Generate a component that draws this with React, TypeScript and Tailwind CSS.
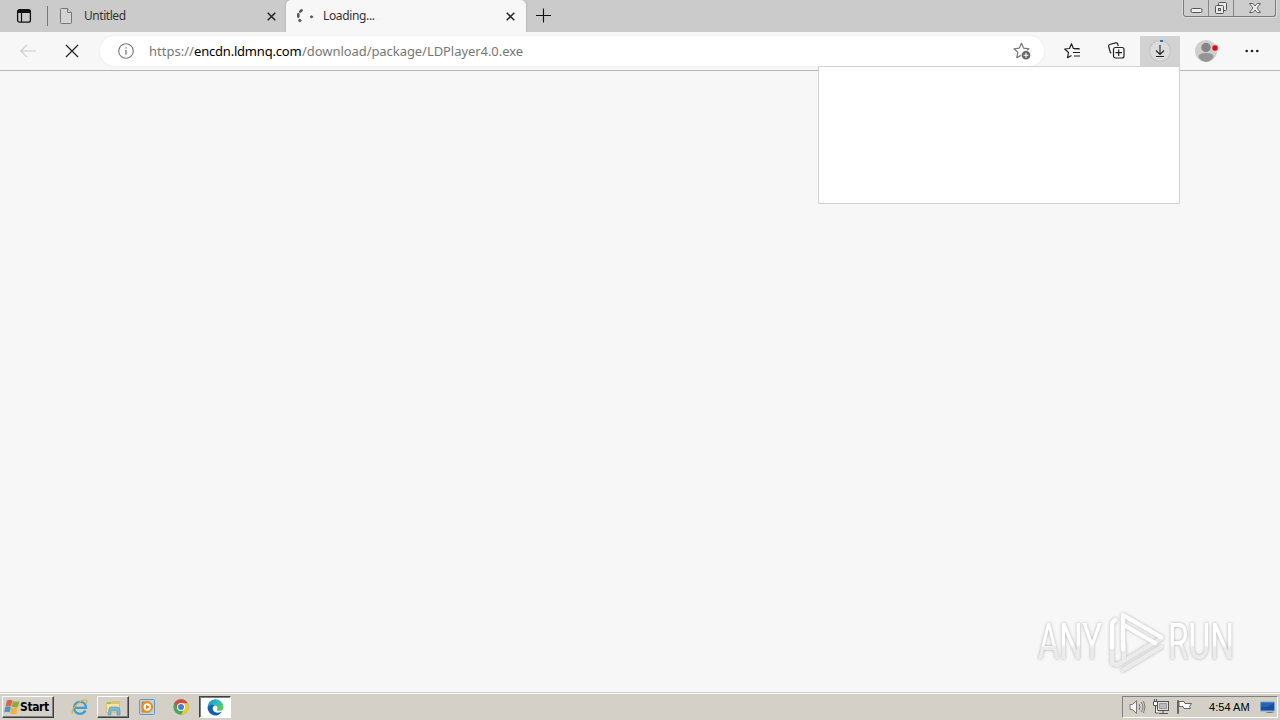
import type { ReactNode } from 'react'

export default function App() {
  return (
    <div className="relative flex h-[720px] w-[1280px] flex-col overflow-hidden bg-[#f7f7f7] font-['Noto_Sans','Open_Sans',sans-serif] text-[#222]">
      <TabStrip />
      <Toolbar />
      <main className="flex flex-1 items-end justify-end pr-[30px] pb-[15px]">
        <Watermark />
      </main>
      <Taskbar />
      {/* downloads flyout */}
      <div className="absolute top-[66px] left-[818px] h-[138px] w-[362px] border border-[#d2d2d2] bg-white" />
    </div>
  )
}

function TabStrip() {
  return (
    <header className="flex h-8 shrink-0 bg-[#cbcbcb]">
      <div className="flex w-[47px] items-center pl-4">
        <svg width="16" height="16" viewBox="0 0 16 16" fill="none" stroke="#111">
          <rect x="1.6" y="1.6" width="12.8" height="12.6" rx="2" strokeWidth="1.3" />
          <path d="M2 3.4h12" strokeWidth="3.2" />
          <path d="M5.5 5v9" strokeWidth="1.2" />
        </svg>
      </div>
      <div className="mt-[6px] h-5 w-px bg-[#777]" />
      <div className="flex w-[238px] items-center pl-3">
        <svg width="12" height="16" viewBox="0 0 12 16" fill="#d4d4d4" stroke="#777">
          <path d="M.5 1.5q0-1 1-1H7.500L11.500 4.500V14.500q0 1-1 1h-9q-1 0-1-1z" />
          <path d="M7.500.5v4h4" />
        </svg>
        <span className="ml-3 text-[12px] leading-4 tracking-[-0.45px] text-[#333]">Untitled</span>
        <CloseIcon className="mr-[10px] ml-auto" />
      </div>
      <div className="flex w-[240px] items-center rounded-t-[5px] bg-[#f7f7f7] pl-[10px] shadow-[0_0_2px_#999]">
        <svg width="18" height="16" viewBox="0 0 18 16" fill="none" stroke="#555" strokeLinecap="round">
          <path d="M5.600 2.300 4.200 3.600M2.300 6.300v2.300" strokeWidth="2.600" />
          <circle cx="3.800" cy="12.500" r="1.200" fill="#555" strokeWidth=".8" />
          <circle cx="15.500" cy="8.800" r="1.100" fill="#555" strokeWidth=".8" />
        </svg>
        <span className="ml-[9px] text-[12px] leading-4 tracking-[-0.35px] text-[#333]">Loading...</span>
        <CloseIcon className="mr-[11px] ml-auto" />
      </div>
      <svg className="mt-2 ml-[10px]" width="15" height="15" viewBox="0 0 15 15" stroke="#111" strokeWidth="1.1">
        <path d="M0 7.500h15M7.500.5v14" />
      </svg>
      <div className="mr-[4px] ml-auto flex h-[17px] w-[93px] rounded-b-[3px] border border-t-0 border-[#7b7b7b] bg-[#cdcdcd] shadow-[0_0_0_1px_#dcdcdc]">
        <div className="flex w-[25px] justify-center border-r border-[#888]">
          <svg width="13" height="16" viewBox="0 0 13 16">
            <rect x="1" y="8.500" width="11" height="4" rx="1.500" fill="#eee" stroke="#555" />
          </svg>
        </div>
        <div className="flex w-[25px] justify-center border-r border-[#888]">
          <svg width="14" height="16" viewBox="0 0 14 16" fill="#e8e8e8" stroke="#555">
            <rect x="4.500" y="2.500" width="8" height="8" rx="1" />
            <rect x="1.500" y="5.500" width="8" height="8" rx="1" />
            <rect x="4.500" y="8.500" width="2" height="2" />
          </svg>
        </div>
        <div className="flex flex-1 justify-center">
          <svg width="14" height="16" viewBox="0 0 14 16" fill="#eee" stroke="#555" strokeWidth=".9">
            <path d="M1.500 3.500h3.300L7 6l2.200-2.500h3.300L9 8l3.500 4.500H9.200L7 10l-2.200 2.500H1.500L5 8z" />
          </svg>
        </div>
      </div>
    </header>
  )
}

function CloseIcon({ className }: { className: string }) {
  return (
    <svg className={className} width="9" height="9" viewBox="0 0 9 9" stroke="#222" strokeWidth="1.5">
      <path d="m.7.7 7.600 7.600M8.300.7.700 8.300" />
    </svg>
  )
}

function Toolbar() {
  return (
    <nav className="flex h-[39px] shrink-0 border-b border-[#b8b8b8] bg-[#f7f7f7]">
      <div className="flex w-[100px] items-center gap-[29px] pl-5">
        <svg width="16" height="14" viewBox="0 0 16 14" fill="none" stroke="#cacaca" strokeWidth="1.1">
          <path d="M7 .8.800 7 7 13.200M1 7h15" />
        </svg>
        <svg width="14" height="14" viewBox="0 0 14 14" stroke="#222" strokeWidth="1.2">
          <path d="m1 1 12 12M13 1 1 13" />
        </svg>
      </div>
      <div className="mt-1 flex h-[30px] w-[944px] items-center rounded-full bg-white pl-[18px] shadow-[0_0_2px_1px_#f0f0f0]">
        <svg width="16" height="16" viewBox="0 0 16 16" fill="none" stroke="#777" strokeWidth="1.1">
          <circle cx="8" cy="8" r="7.300" />
          <path d="M8 7v4.700M8 4.300v1.300" strokeWidth="1.300" />
        </svg>
        <div className="ml-[15px] flex text-[13px] leading-5 whitespace-nowrap text-[#777]">
          <span className="w-[45px]">https://</span>
          <span className="w-[108px] tracking-[-0.2px] text-black">encdn.ldmnq.com</span>
          <span className="tracking-[-0.06px]">/download/package/LDPlayer4.0.exe</span>
        </div>
        <svg className="mr-[13px] ml-auto" width="18" height="18" viewBox="0 0 18 18">
          <path d="m8.500 1.300 2.200 4.900 5.300.6-4 3.600 1 5.300-4.500-2.600-4.700 2.600 1-5.300L1 6.800l5.200-.6z" fill="none" stroke="#777" strokeWidth="1.200" strokeLinejoin="round" />
          <circle cx="13" cy="13.200" r="4.700" fill="#666" stroke="#fff" strokeWidth=".8" />
          <path d="M10.500 13.200h5M13 10.700v5" stroke="#fff" strokeWidth="1.100" />
        </svg>
      </div>
      <div className="flex flex-1 items-center pb-px pl-[20px]">
        <svg width="17" height="16" viewBox="0 0 17 16" fill="none" stroke="#222" strokeWidth="1.200" strokeLinejoin="round">
          <path d="M15 5.700 9.300 5.300 7.500.8 5.500 5.500.7 6l3.800 3.500-1 5.200 4-2.300M10 6h6M9 9.500h7M10 13h6" />
        </svg>
        <svg className="ml-[27px]" width="17" height="17" viewBox="0 0 17 17" fill="none" stroke="#222" strokeWidth="1.200">
          <path d="m3.300 11.200-1-.8L.7 4.500q-.4-1.500 1-2l6-1.600q1.500-.4 2 1l.5 2.200" />
          <rect x="5.500" y="5.500" width="10.500" height="10.500" rx="2" />
          <path d="M10.700 7.500v6.500M7.500 10.700H14" />
        </svg>
        <div className="mt-[1px] ml-[15px] flex h-[30px] w-[40px] items-center justify-center bg-[#d2d2d2]">
          <svg width="24" height="24" viewBox="0 0 24 24" fill="none">
            <circle cx="12" cy="12" r="10.500" fill="#dcdcdc" stroke="#c8c8c8" strokeWidth="1.500" />
            <path d="M12 2h3" stroke="#2876b8" strokeWidth="2" />
            <path d="M12 6v9.500m-4-4 4 4 4-4M8 17.500h8" stroke="#222" strokeWidth="1.100" />
          </svg>
        </div>
        <svg className="ml-[15px]" width="24" height="24" viewBox="0 0 24 24">
          <circle cx="11" cy="12" r="11" fill="#d0cfcd" />
          <circle cx="11" cy="8.500" r="4.700" fill="#858585" />
          <path d="M3.500 18c0-3 3-4 7.500-4s7.500 1 7.500 4c-2 3.300-4.700 4.700-7.500 4.700S5.500 21.300 3.500 18z" fill="#959595" />
          <circle cx="20" cy="9" r="3.200" fill="#e00b16" stroke="#eee" strokeWidth=".6" />
        </svg>
        <svg className="ml-[26px]" width="14" height="4" viewBox="0 0 14 4" fill="#222">
          <circle cx="1.700" cy="2" r="1.350" />
          <circle cx="7" cy="2" r="1.350" />
          <circle cx="12.300" cy="2" r="1.350" />
        </svg>
      </div>
    </nav>
  )
}

function Watermark() {
  return (
    <svg width="220" height="74" viewBox="0 0 220 74">
      <defs>
        <linearGradient id="sheen" x1="0" y1="0" x2="0" y2="1">
          <stop offset=".54" stopColor="#fff" />
          <stop offset=".6" stopColor="#ebebeb" />
        </linearGradient>
        <filter id="glow" x="-10%" y="-20%" width="120%" height="140%">
          <feDropShadow dx="0" dy="0" stdDeviation="1.600" floodColor="#777" floodOpacity=".6" />
        </filter>
      </defs>
      <g filter="url(#glow)" fill="url(#sheen)" fontFamily="Roboto, 'Liberation Sans', sans-serif" fontSize="50">
        <text transform="translate(8 56) scale(.655 1)">ANY</text>
        <text transform="translate(138 56) scale(.667 1)">RUN</text>
      </g>
      <g filter="url(#glow)" fill="none" strokeLinecap="round" strokeLinejoin="round" strokeWidth="4.300">
        <path d="M94 42v14M82 36v24l5 2 45-27M93 67l38-23" stroke="#ebebeb" />
        <path d="M82 44V20l3-3M93 46V12l38 22M94 22l31 18" stroke="#fff" />
      </g>
    </svg>
  )
}

function TaskButton({ active, children }: { active?: boolean; children: ReactNode }) {
  return (
    <div
      className={`flex h-[22px] w-8 items-center justify-center border ${
        active
          ? 'border-t-[#404040] border-r-white border-b-white border-l-[#404040] bg-white shadow-[inset_1px_1px_#808080]'
          : 'border-t-white border-r-[#404040] border-b-[#404040] border-l-white bg-[#d4d0c8] shadow-[inset_-1px_-1px_#808080]'
      }`}
    >
      {children}
    </div>
  )
}

function Taskbar() {
  return (
    <footer className="flex h-7 shrink-0 items-start border-t border-[#d4d0c8] bg-[#d4d0c8] pt-[3px] shadow-[inset_0_1px_white]">
      <div className="ml-[2px] flex h-[22px] w-[52px] items-center border border-t-white border-r-[#404040] border-b-[#404040] border-l-white pl-px shadow-[inset_-1px_-1px_#808080]">
        <svg width="16" height="16" viewBox="0 0 16 16">
          <path d="M3 1.500q3-1.700 5.500 0L7 7.500q-2.500-1.300-5.500 0z" fill="#df633a" />
          <path d="M9 2q3 1.500 6.500 0L14 8q-3 1-6.300-.5z" fill="#8cac43" />
          <path d="M1.300 8q2.500-1.300 5.500 0L5.600 13.500q-2.500-1.500-5.400 0z" fill="#4b94c9" />
          <path d="M7.500 8.300q2.500 1.500 6.300.2L12.300 14.500q-3 1.500-6.200-.2z" fill="#efb335" />
        </svg>
        <span className="font-['DejaVu_Sans_Condensed','DejaVu_Sans',sans-serif] text-[12px] leading-4 font-bold tracking-[-0.4px] text-black">Start</span>
      </div>
      <div className="ml-[17px] flex h-[22px] w-[17px] items-center">
        <svg width="17" height="18" viewBox="0 0 17 18" fill="none">
          <path d="M14.500 12.500c-1.200 2.200-3 3.300-5.500 3.300-3.600 0-6-2.500-6-6s2.500-6 6-6c3.800 0 6 2.500 6 6H4" stroke="#3f9ed0" strokeWidth="2.300" />
          <path d="M1.500 15.500C-.5 11.500 9.500 1 15 2c1.500.3 1.300 2 .3 3.500" stroke="#d2b23d" strokeWidth="1.200" />
        </svg>
      </div>
      <div className="ml-[9px]">
        <TaskButton>
          <svg width="17" height="17" viewBox="0 0 17 17">
            <path d="M1 3h5l1-1h8v12H1z" fill="#dcc36b" />
            <path d="M2 5h12v8H2z" fill="#f7e6a0" />
            <path d="M4 10q0-2 2-2h6q3 0 3 3v5h-3v-4H6v4H3z" fill="#79b8d9" stroke="#5b91b2" strokeWidth=".6" />
            <path d="M2 4h4" stroke="#7faf57" />
          </svg>
        </TaskButton>
      </div>
      <div className="ml-[10px] flex h-[22px] w-4 items-center">
        <svg width="16" height="16" viewBox="0 0 16 16">
          <rect x=".5" y=".5" width="15" height="15" rx="1" fill="#b8d4e5" stroke="#629abd" />
          <path d="M2.500 2.500h8v11h-8z" fill="#e48219" />
          <circle cx="8.300" cy="8" r="5.800" fill="#f28b18" />
          <circle cx="8.300" cy="8" r="3.700" fill="#fff" />
          <path d="m7 5.700 3.600 2.300L7 10.300z" fill="#ed7d16" />
        </svg>
      </div>
      <div className="ml-[18px] flex h-[22px] w-4 items-center">
        <svg width="16" height="16" viewBox="0 0 16 16">
          <circle cx="8" cy="8" r="7.700" fill="#46a95a" />
          <path d="M1.300 4.200A7.700 7.700 0 0 1 14.700 4.200H8L5 10z" fill="#dc483d" />
          <path d="M8 4.200h6.700A7.700 7.700 0 0 1 8 15.700l3.400-6z" fill="#f4c62f" />
          <circle cx="8" cy="8" r="4" fill="#fff" />
          <circle cx="8" cy="8" r="3" fill="#467fd0" />
        </svg>
      </div>
      <div className="ml-[10px]">
        <TaskButton active>
          <svg width="17" height="17" viewBox="0 0 17 17">
            <defs>
              <linearGradient id="edge" x1="0" y1="0" x2="1" y2=".5">
                <stop stopColor="#168ed0" />
                <stop offset=".55" stopColor="#29b9c5" />
                <stop offset="1" stopColor="#63c85b" />
              </linearGradient>
            </defs>
            <path d="M.5 8.500A8 8 0 0 1 16.500 8c0 3-2.300 3.800-4.500 3.800-1.700 0-2.500-.6-2-1.300 1.300-2-.2-4-2.500-4C4.500 6 1.500 7 .5 8.500z" fill="url(#edge)" />
            <path d="M.5 8.500C1.500 5.300 6 5.200 8 6.500 4.500 7 4.800 13.500 10.500 13.700c2 .1 3.500-.6 4.500-1.200C12.800 16 10.500 16.600 8 16.600A8 8 0 0 1 .5 8.500z" fill="#1460ad" />
          </svg>
        </TaskButton>
      </div>
      <div className="mr-[2px] ml-auto flex h-[22px] w-[156px] items-center border border-t-[#808080] border-r-white border-b-white border-l-[#808080] pl-[6px]">
        <svg width="17" height="16" viewBox="0 0 17 16" fill="none" stroke="#777">
          <path d="M1 5.500h2.500l4-4v13l-4-4H1z" fill="#f5f5f5" />
          <path d="M10 5q2 3 0 6M12 3q4 5 0 10M14.500 2q3 6 0 12" />
        </svg>
        <svg className="ml-[7px]" width="17" height="16" viewBox="0 0 17 16" fill="none" stroke="#555">
          <rect x="4.500" y="2.500" width="11" height="9" fill="#ddd" />
          <path d="M6.500 4.500h7v5h-7z" fill="#bbb" stroke="#999" />
          <path d="M10 12v2M6 14.500h9" />
          <path d="M.5 2.500h4v4h-4zM1.500 0v2M3.500 0v2M2.500 7v7h3" fill="#fff" />
        </svg>
        <svg className="ml-[6px]" width="17" height="16" viewBox="0 0 17 16" stroke="#666">
          <path d="M3 2.500h5l1 2h6.500l-2 3 1 2H8l-1-2H3z" fill="#fafafa" />
          <path d="M1.500 1.500h1v13h-1z" fill="#eee" />
        </svg>
        <span className="ml-[16px] w-[42px] whitespace-nowrap font-['Liberation_Sans',sans-serif] text-[11px] leading-4 tracking-[0.05px] text-black">4:54 AM</span>
        <svg className="ml-[9px]" width="17" height="16" viewBox="0 0 17 16">
          <path d="M.5 3h14v9H.5z" fill="#2762b5" stroke="#73a2d5" />
          <path d="M1 8q7 1 13-4v7H1z" fill="#174d99" />
          <path d="M5 13h6l4 1H8z" fill="#777" />
        </svg>
      </div>
    </footer>
  )
}
